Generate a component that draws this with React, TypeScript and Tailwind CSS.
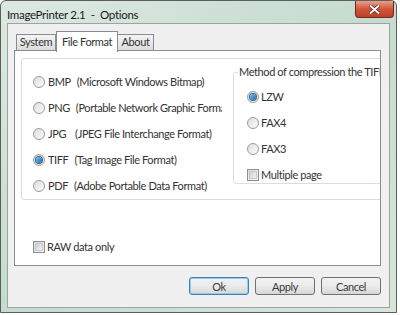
import React from "react";

const font = { fontFamily: 'Lato, "Open Sans", Arial, sans-serif' };

function Radio({ checked }: { checked?: boolean }) {
  return (
    <span className="flex h-[12px] w-[12px] shrink-0 items-center justify-center rounded-full border border-[#9a9a9a] bg-gradient-to-br from-[#dedede] to-[#fafafa]">
      {checked && (
        <span className="h-[6px] w-[6px] rounded-full bg-gradient-to-br from-[#7ec3f0] to-[#1b63a8] ring-1 ring-[#2d5f8b]" />
      )}
    </span>
  );
}

function Check() {
  return (
    <span className="h-[12px] w-[12px] shrink-0 border border-[#8f8f8f] bg-gradient-to-br from-[#dcdcdc] to-[#f7f7f7] p-[1px]">
      <span className="block h-full w-full border border-[#c8c8c8] bg-gradient-to-br from-[#cfcfcf] to-[#f2f2f2]" />
    </span>
  );
}

function Option({ checked, name, desc, wide }: { checked?: boolean; name: string; desc: string; wide?: boolean }) {
  return (
    <div className="flex h-[26px] items-center gap-[3px]">
      <Radio checked={checked} />
      <span className="w-[174px] overflow-hidden whitespace-nowrap">
        {name}
        <span className={wide ? "ml-[9px]" : "ml-[6px]"}>{desc}</span>
      </span>
    </div>
  );
}

function Button({ label, def }: { label: string; def?: boolean }) {
  return (
    <button
      className={
        "h-[18px] w-[60px] rounded-[3px] border bg-gradient-to-b from-[#f2f2f2] via-[#ebebeb] to-[#d6d6d6] leading-none text-[#3a3a3a] " +
        (def ? "border-[#3c7fb1] shadow-[inset_0_0_0_1px_#8fd0f0]" : "border-[#707070]")
      }
    >
      {label}
    </button>
  );
}

export default function App() {
  return (
    <div className="h-[315px] w-[400px] bg-white text-[11px] tracking-[-0.4px] text-[#333]" style={font}>
      <div className="flex h-[313px] w-[397px] flex-col rounded-t-[6px] border border-[#5a5f5c] bg-gradient-to-br from-[#dce9e2] via-[#c6dbcf] to-[#d6e6dd] px-[6px] pb-[4px]">
        {/* title bar */}
        <div className="flex h-[22px] items-start justify-between">
          <span className="whitespace-pre pt-[5px] text-[11.5px] tracking-[-0.3px] text-[#1a1a1a]">ImagePrinter 2.1  -  Options</span>
          <div className="mr-[-4px] flex h-[17px] w-[39px] items-center justify-center rounded-b-[4px] border border-t-0 border-[#6b2b1d] bg-gradient-to-b from-[#e8a08c] via-[#d0553a] to-[#c0402a]">
            <svg width="11" height="9" viewBox="0 0 11 9">
              <path d="M1.5 1 L9.5 8 M9.5 1 L1.5 8" stroke="#5a1a10" strokeWidth="3.4" strokeLinecap="round" />
              <path d="M1.5 1 L9.5 8 M9.5 1 L1.5 8" stroke="#fff" strokeWidth="2" strokeLinecap="round" />
            </svg>
          </div>
        </div>

        {/* client */}
        <div className="flex flex-1 flex-col border border-[#9aa59f] bg-[#f0f0f0] pl-[6px] pr-[8px] pt-[7px]">
          {/* tabs */}
          <div className="relative z-10 flex h-[20px] items-end pl-[2px]">
            <div className="mb-[1px] flex h-[16px] w-[40px] items-center justify-center border border-b-0 border-[#898c95] bg-gradient-to-b from-[#f4f4f4] to-[#dcdcdc]">
              System
            </div>
            <div className="-mb-[1px] flex h-[21px] w-[62px] items-center justify-center border border-b-0 border-[#898c95] bg-white">
              File Format
            </div>
            <div className="mb-[1px] flex h-[16px] w-[36px] items-center justify-center border border-b-0 border-l-0 border-[#898c95] bg-gradient-to-b from-[#f4f4f4] to-[#dcdcdc]">
              About
            </div>
          </div>
          <div className="-mt-px flex h-[216px] flex-col overflow-hidden border border-[#898c95] bg-white pl-[6px] pt-[7px]">
            <div className="mr-[-12px] flex h-[142px] rounded-[3px] border border-[#dcdcdc] pl-[11px]">
              <div className="flex w-[200px] shrink-0 flex-col pt-[10px]">
                <Option name="BMP" desc="(Microsoft Windows Bitmap)" />
                <Option name="PNG" desc="(Portable Network Graphic Format)" />
                <Option name="JPG" desc="(JPEG File Interchange Format)" wide />
                <Option checked name="TIFF" desc="(Tag Image File Format)" />
                <Option name="PDF" desc="(Adobe Portable Data Format)" />
              </div>
              <div className="mt-[13px] h-[112px] min-w-0 flex-1 rounded-[3px] border border-[#d5dfe5] pl-[13px]">
                <div className="-mt-[9px] ml-[-9px] w-fit whitespace-nowrap bg-white px-[1px] leading-[16px]">
                  Method of compression the TIFF
                </div>
                <div className="flex flex-col pt-[4px]">
                  <div className="flex h-[26px] items-center gap-[2px]">
                    <Radio checked />
                    <span>LZW</span>
                  </div>
                  <div className="flex h-[26px] items-center gap-[2px]">
                    <Radio />
                    <span>FAX4</span>
                  </div>
                  <div className="flex h-[26px] items-center gap-[2px]">
                    <Radio />
                    <span>FAX3</span>
                  </div>
                  <div className="flex h-[26px] items-center gap-[2px]">
                    <Check />
                    <span>Multiple page</span>
                  </div>
                </div>
              </div>
            </div>
            <div className="mt-[39px] flex items-center gap-[2px] pl-[12px]">
              <Check />
              <span>RAW data only</span>
            </div>
          </div>

          {/* buttons */}
          <div className="flex justify-end gap-[6px] pt-[11px]">
            <Button label="Ok" def />
            <Button label="Apply" />
            <Button label="Cancel" />
          </div>
        </div>
      </div>
    </div>
  );
}
